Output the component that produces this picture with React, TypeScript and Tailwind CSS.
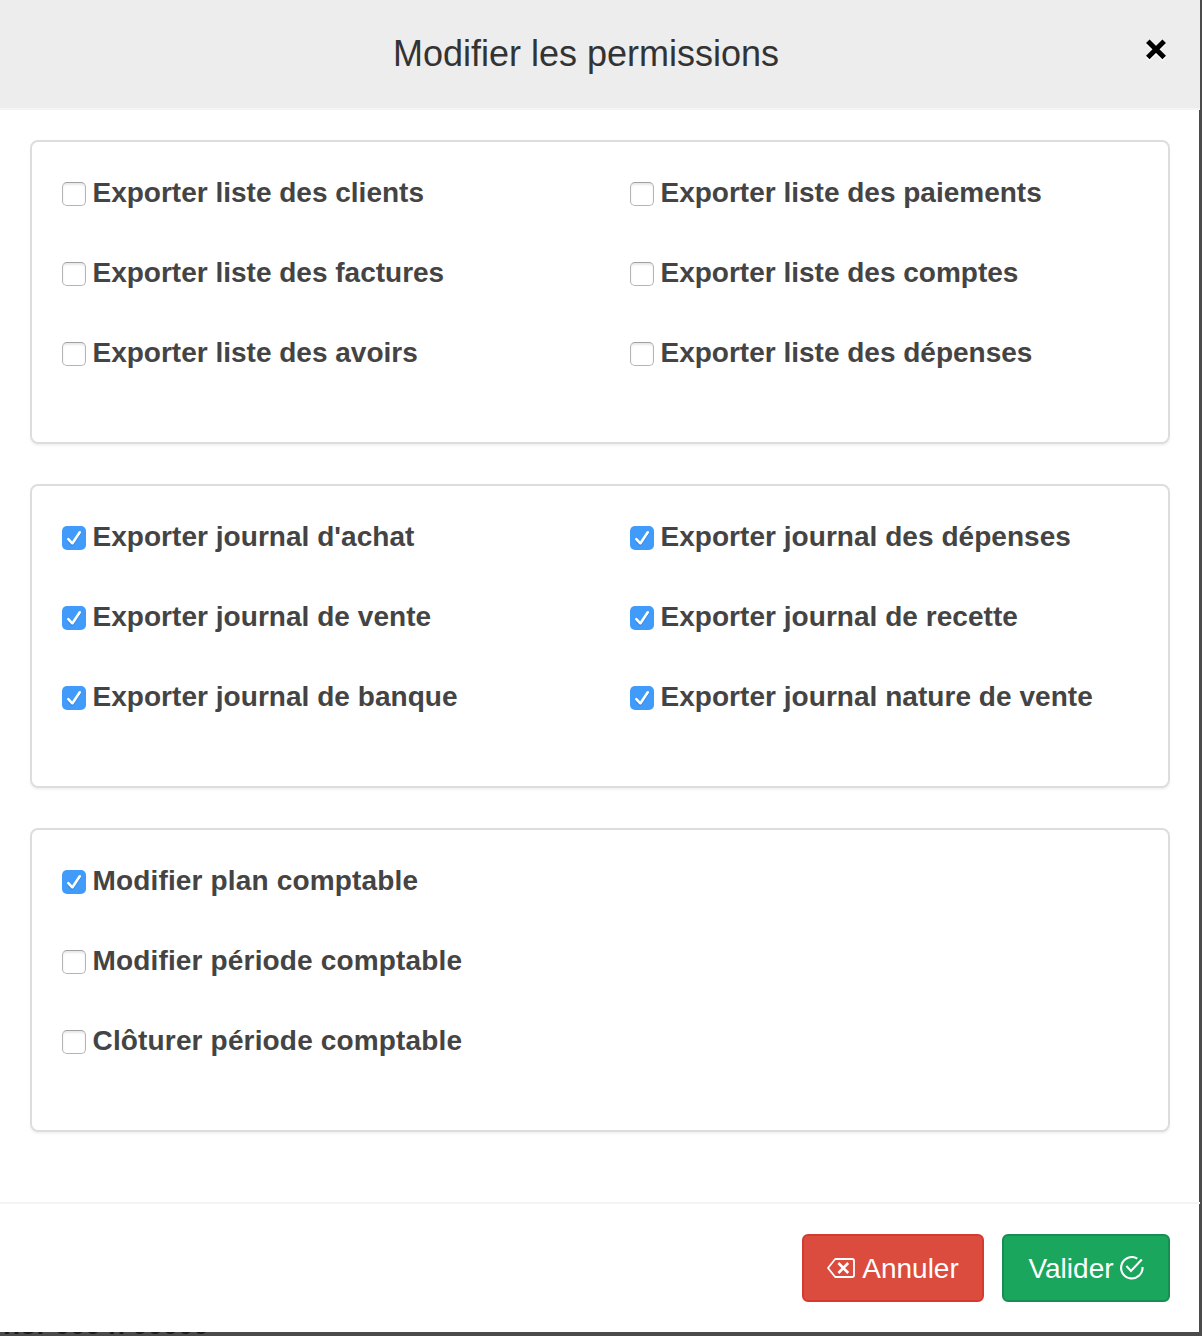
import React, { useState } from "react";

interface Permission {
  id: string;
  label: string;
  checked: boolean;
}

interface PermissionCheckboxProps {
  permission: Permission;
  onToggle: (id: string) => void;
}

const initialGroups: Permission[][] = [
  [
    { id: "clients", label: "Exporter liste des clients", checked: false },
    { id: "paiements", label: "Exporter liste des paiements", checked: false },
    { id: "factures", label: "Exporter liste des factures", checked: false },
    { id: "comptes", label: "Exporter liste des comptes", checked: false },
    { id: "avoirs", label: "Exporter liste des avoirs", checked: false },
    { id: "depenses", label: "Exporter liste des dépenses", checked: false },
  ],
  [
    { id: "j-achat", label: "Exporter journal d'achat", checked: true },
    { id: "j-depenses", label: "Exporter journal des dépenses", checked: true },
    { id: "j-vente", label: "Exporter journal de vente", checked: true },
    { id: "j-recette", label: "Exporter journal de recette", checked: true },
    { id: "j-banque", label: "Exporter journal de banque", checked: true },
    { id: "j-nature", label: "Exporter journal nature de vente", checked: true },
  ],
  [
    { id: "plan", label: "Modifier plan comptable", checked: true },
    { id: "periode", label: "Modifier période comptable", checked: false },
    { id: "cloture", label: "Clôturer période comptable", checked: false },
  ],
];

const groupTracking = ["tracking-normal", "tracking-[0.04px]", "tracking-[0.16px]"];

const BackspaceIcon = () => (
  <svg width="28" height="20" viewBox="0 0 28 20" fill="none" stroke="currentColor" strokeLinejoin="round">
    <path d="M8.2 1H25.2Q27 1 27 2.8V17.2Q27 19 25.2 19H8.2L1 10Z" strokeWidth="1.8" />
    <path d="M11.4 5L21.2 15M21.2 5L11.4 15" strokeWidth="2.6" />
  </svg>
);

const CheckCircleIcon = () => (
  <svg width="24" height="24" viewBox="0 0 24 24" fill="none" stroke="currentColor" strokeWidth="2.1">
    <path d="M17.3 2.6A10.7 10.7 0 1 0 22.5 11" />
    <path d="M6.4 10.1L11 14.9L21.8 3.6" />
  </svg>
);

const PermissionCheckbox: React.FC<PermissionCheckboxProps> = ({ permission, onToggle }) => (
  <label className="flex h-10 cursor-pointer items-center gap-[6.5px] text-[28px] leading-10 font-bold whitespace-nowrap text-[#444]">
    <input
      type="checkbox"
      checked={permission.checked}
      onChange={() => onToggle(permission.id)}
      className="peer sr-only"
    />
    {permission.checked ? (
      <span className="mt-0.5 size-6 shrink-0 rounded-[5px] bg-[#409bfa]">
        <svg width="24" height="24" viewBox="0 0 24 24" fill="none" strokeLinecap="round" strokeLinejoin="round" strokeWidth="2.6">
          <path d="M6.3 14.4L10.3 18.6L17.8 7.5" stroke="#2f80dc" />
          <path d="M6.3 13.2L10.3 17.4L17.8 6.3" stroke="#fff" />
        </svg>
      </span>
    ) : (
      <span className="mt-0.5 size-6 shrink-0 rounded-[5px] border border-[#b4b4b4] border-t-[#a0a0a0] bg-white shadow-[inset_0_2px_2px_#e9e9e9]" />
    )}
    <span>{permission.label}</span>
  </label>
);

const App: React.FC = () => {
  const [groups, setGroups] = useState<Permission[][]>(initialGroups);

  const handleToggle = (id: string) => {
    setGroups((prev) =>
      prev.map((group) =>
        group.map((item) => (item.id === id ? { ...item, checked: !item.checked } : item))
      )
    );
  };

  return (
    <div className="h-[1336px] w-[1202px] overflow-hidden bg-[#4b4b4c] font-['Liberation_Sans',Arial,sans-serif]">
      {/* Header */}
      <header className="flex h-[110px] w-[1200px] items-start border-b-2 border-[#f4f4f4] bg-[#ededed] px-[30px]">
        <h4 className="flex-1 pt-[28px] pr-[3px] text-center text-[36px] leading-[52px] text-[#333]">
          Modifier les permissions
        </h4>
        <button className="mt-[39px] mr-[3px] cursor-pointer text-black" title="Fermer">
          <svg width="22" height="23" viewBox="0 0 22 23" fill="none" strokeWidth="5">
            <path d="M2.8 3.8L19.2 20.2M19.2 3.8L2.8 20.2" stroke="#fff" />
            <path d="M2.8 2.2L19.2 18.6M19.2 2.2L2.8 18.6" stroke="currentColor" />
          </svg>
        </button>
      </header>

      {/* Permission groups */}
      <main className="flex h-[1092px] w-[1199px] flex-col gap-10 bg-white pt-[30px] pr-[29px] pl-[30px]">
        {groups.map((group, index) => (
          <section
            key={index}
            className={`grid h-[304px] shrink-0 content-start gap-y-10 rounded-lg border-2 border-[#ddd] px-[30px] pt-[31px] shadow-[0_2px_2px_rgba(0,0,0,0.05)] ${
              groupTracking[index]
            } ${group.length > 3 ? "grid-cols-[568px_1fr]" : "grid-cols-1"}`}
          >
            {group.map((permission) => (
              <PermissionCheckbox key={permission.id} permission={permission} onToggle={handleToggle} />
            ))}
          </section>
        ))}
      </main>

      {/* Footer actions */}
      <div className="h-0.5 w-[1200px] bg-[#f4f4f4]" />
      <footer className="flex h-[128px] w-[1199px] items-start justify-end gap-[18px] bg-white pt-[30px] pr-[29px] text-[28px] text-white">
        <button className="flex h-[68px] w-[182px] cursor-pointer items-center justify-center gap-[7px] rounded-md border-2 border-[#d63a2f] bg-[#db4c3f]">
          <BackspaceIcon />
          <span className="pt-0.5">Annuler</span>
        </button>
        <button className="flex h-[68px] w-[168px] cursor-pointer items-center justify-center gap-1.5 rounded-md border-2 border-[#168e50] bg-[#1ba65d]">
          <span className="pt-0.5">Valider</span>
          <CheckCircleIcon />
        </button>
      </footer>

      {/* Page content dimmed behind the dialog */}
      <div className="flex h-1 items-end overflow-hidden pl-[3px] text-[28px] leading-[32px] font-bold tracking-[-0.3px] whitespace-pre text-[#191919]">
        <span className="mb-[-5px]">nor 000 n 00000</span>
      </div>
    </div>
  );
};

export default App;
